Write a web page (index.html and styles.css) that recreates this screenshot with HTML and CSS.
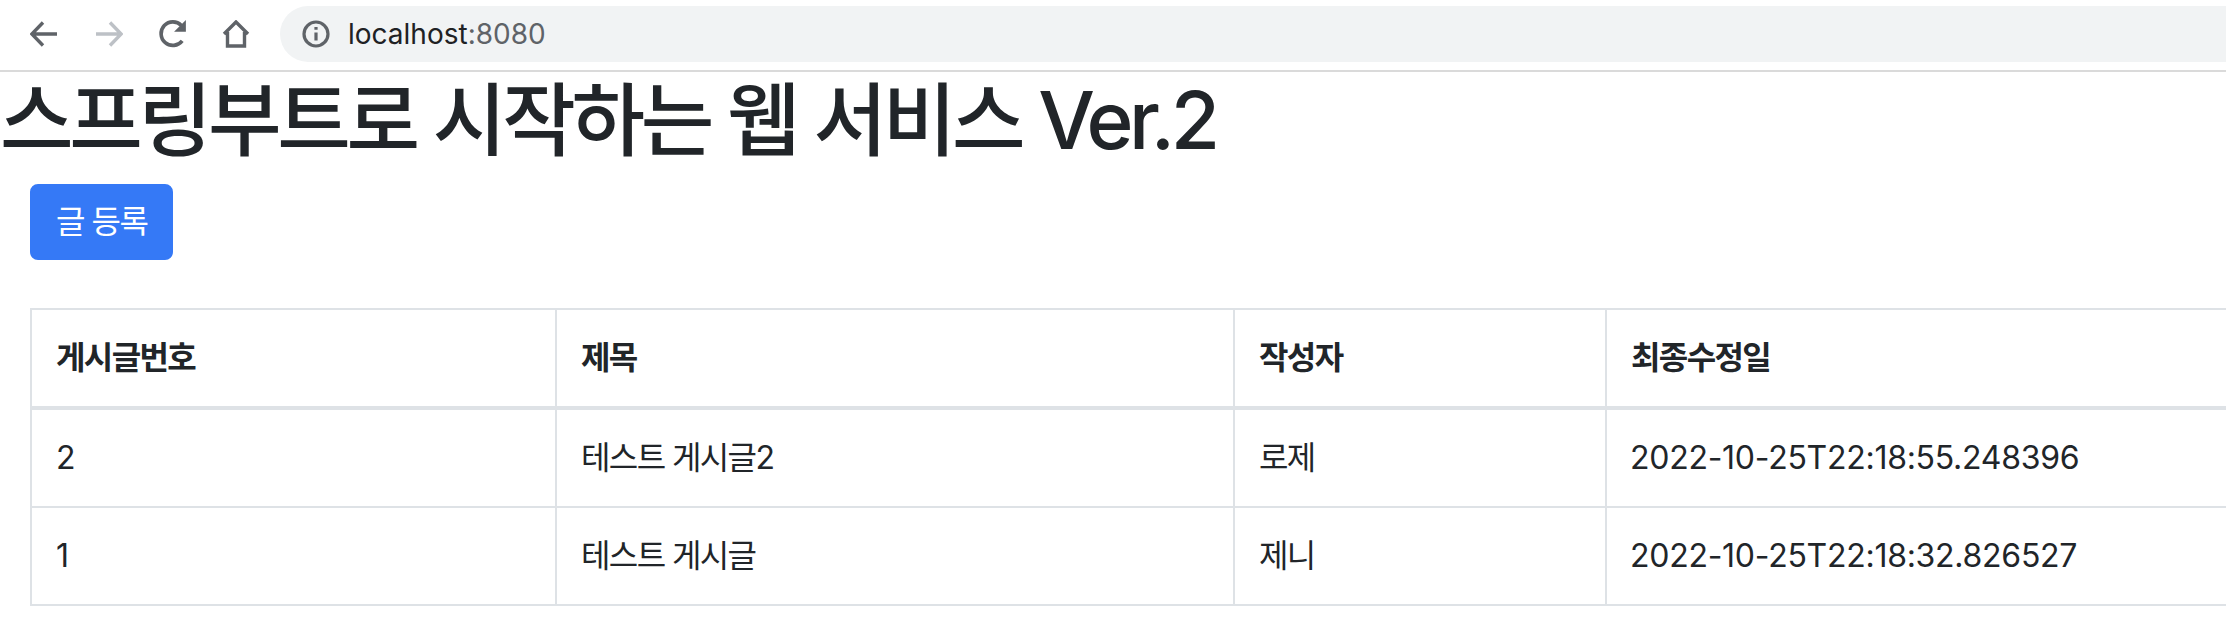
FILE: index.html
```html
<!DOCTYPE html>
<html lang="ko">
<head>
<meta charset="utf-8">
<title>스프링부트로 시작하는 웹 서비스</title>
<link rel="stylesheet" href="styles.css">
</head>
<body>
<header class="toolbar">
  <svg class="nav-icon back" viewBox="0 0 28 26"><path d="M27 13H2M13 1.5 1.8 13 13 24.5"/></svg>
  <svg class="nav-icon forward" viewBox="0 0 28 26"><path d="M1 13h25M15 1.5 26.2 13 15 24.5"/></svg>
  <svg class="nav-icon reload" viewBox="0 0 28 28"><path d="M22.6 20.4A11 11 0 1 1 21.8 6"/><path class="solid" d="M26 1v11H15z"/></svg>
  <svg class="nav-icon home" viewBox="0 0 28 28"><path d="M2 14 14 2l12 12M5.5 12v14h17V12"/></svg>
  <div class="omnibox">
    <svg class="info" viewBox="0 0 28 28"><circle cx="14" cy="14" r="12"/><path d="M14 12.5v8M14 7v2.8"/></svg>
    <span class="url">localhost<span class="port">:8080</span></span>
  </div>
</header>
<h1 class="title">스프링부트로 시작하는 웹 서비스 Ver.2</h1>
<main class="content">
  <a class="btn" href="#">글 등록</a>
  <table class="posts">
    <colgroup>
      <col class="col-id"><col class="col-title"><col class="col-author"><col class="col-date">
    </colgroup>
    <thead>
      <tr><th>게시글번호</th><th>제목</th><th>작성자</th><th>최종수정일</th></tr>
    </thead>
    <tbody>
      <tr><td>2</td><td>테스트 게시글2</td><td>로제</td><td class="date">2022-10-25T22:18:55.248396</td></tr>
      <tr><td>1</td><td>테스트 게시글</td><td>제니</td><td class="date">2022-10-25T22:18:32.826527</td></tr>
    </tbody>
  </table>
</main>
</body>
</html>
```
FILE: styles.css
```css
* { box-sizing: border-box; }
html, body { margin: 0; padding: 0; overflow: hidden; }
body {
  height: 636px;
  background: #fff;
  color: #212529;
  font-family: Inter, "Noto Sans CJK KR", sans-serif;
  font-size: 32px;
  line-height: 48px;
}
.toolbar {
  display: flex;
  align-items: center;
  height: 72px;
  padding: 6px 0 8px 30px;
  background: #fff;
  border-bottom: 2px solid #dadada;
}
.nav-icon {
  flex: none;
  fill: none;
  stroke: #5f6368;
  stroke-width: 3.4;
}
.nav-icon .solid { fill: #5f6368; stroke: none; }
.back { width: 28px; height: 26px; margin-right: 37px; }
.forward { width: 28px; height: 26px; margin-right: 35px; stroke: #bdc1c6; }
.reload { width: 30px; height: 30px; margin-right: 34px; }
.home { width: 28px; height: 28px; margin-right: 30px; }
.omnibox {
  flex: 1;
  display: flex;
  align-items: center;
  height: 56px;
  padding-left: 22px;
  background: #f1f3f4;
  border-radius: 28px 0 0 28px;
}
.info {
  flex: none;
  width: 28px;
  height: 28px;
  margin-right: 18px;
  fill: none;
  stroke: #5f6368;
  stroke-width: 3.2;
}
.url {
  color: #202124;
  font-size: 28px;
  line-height: 32px;
}
.port { color: #5f6368; }
.title {
  margin: 0 0 16px;
  font-size: 80px;
  font-weight: 500;
  line-height: 96px;
  letter-spacing: -4.3px;
}
.content { padding: 0 30px; }
.btn {
  display: inline-block;
  padding: 12px 24px;
  border: 2px solid #3579f6;
  border-radius: 8px;
  background: #3579f6;
  color: #fff;
  text-decoration: none;
  vertical-align: top;
  letter-spacing: -1.5px;
}
.posts {
  width: 2220px;
  margin-top: 48px;
  table-layout: fixed;
  border-collapse: collapse;
}
.col-id { width: 525px; }
.col-title { width: 678px; }
.col-author { width: 372px; }
.col-date { width: 645px; }
.posts th, .posts td {
  padding: 24px;
  border: 2px solid #dee2e6;
  text-align: left;
  letter-spacing: -1.6px;
}
.posts th { font-weight: 700; border-bottom-width: 4px; }
.posts .date { padding-left: 23px; letter-spacing: -0.27px; }
```
